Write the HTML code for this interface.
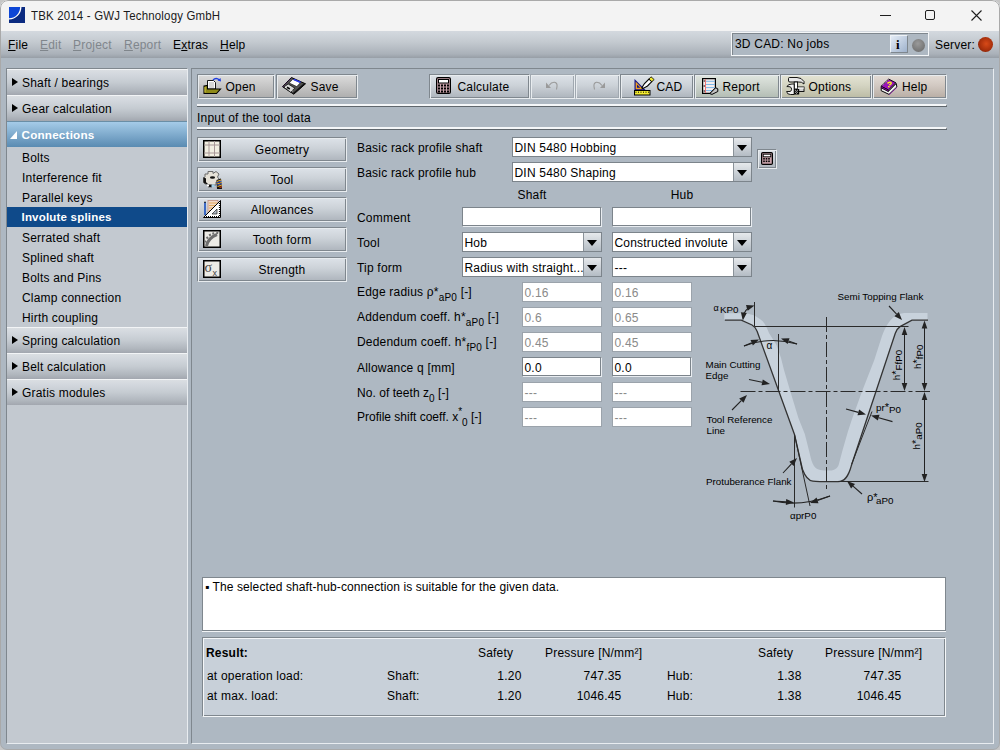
<!DOCTYPE html>
<html><head><meta charset="utf-8"><style>
*{box-sizing:border-box;margin:0;padding:0}
html,body{width:1000px;height:750px;overflow:hidden;background:#c6c6c6}
body{font-family:"Liberation Sans",sans-serif;font-size:12px;color:#000;position:relative}
.a{position:absolute;white-space:nowrap;line-height:1;letter-spacing:0.2px}
svg.a{letter-spacing:0}
#win{position:absolute;left:0;top:0;width:1000px;height:750px;background:#aeb8c2;border-radius:8px 8px 7px 7px;overflow:hidden}
#frame{position:absolute;left:0;top:0;width:1000px;height:750px;border:1px solid #a9a9a9;border-radius:8px 8px 7px 7px}
.u{text-decoration:underline;text-underline-offset:1px}
.dis{color:#80868c}
.hdr{background:linear-gradient(#dadee2,#d2d7dd 20%,#c5cbd1 50%,#b2b8bf 80%,#a2a7af);border-top:1px solid #f2f4f6}
.btn{border:1px solid;border-color:#7f878e #e8ecef #e8ecef #7f878e;box-shadow:inset 1px 1px #e8ecef, inset -1px -1px #7f878e}
.g1{background:linear-gradient(#dcdcdc,#adadad)}
.g2{background:linear-gradient(#dde2e8,#ccd2d8 45%,#adb4bc)}
.g3{background:linear-gradient(#e0e6e0,#cdd4cd 45%,#b2bcb3)}
.g4{background:linear-gradient(#e4e4d4,#d4d4c2 45%,#bbbba4)}
.g5{background:linear-gradient(#e3dcd6,#d2c9c2 45%,#b8ada4)}
.inp{background:#fff;border:1px solid #7c848b;border-right-color:#e9edf1;border-bottom-color:#e9edf1;box-shadow:inset -1px -1px #7c848b}
.inpd{background:#fff;border:1px solid #9ba3ab}
.cmb{background:#fff;border:1px solid #7c848b}
.arr{position:absolute;right:0;top:0;width:18px;height:100%;background:linear-gradient(#e6e9ec,#b4bcc4);border-left:1px solid #8a9299}
.arr:after{content:"";position:absolute;left:3px;top:7px;border-left:5px solid transparent;border-right:5px solid transparent;border-top:6px solid #000}
.dbtn{border-color:#a0a8b0 #e8ecef #e8ecef #a0a8b0;box-shadow:inset 1px 1px #e8ecef, inset -1px -1px #a0a8b0}
.sep{height:3px;border-top:2px solid #f4f6f8;border-bottom:1px solid #5f666c;border-right:1px solid #5f666c}
</style></head><body>
<div id="win">
<div class="a " style="left:0px;top:0px;width:1000px;height:31px;background:#f3f3f3"></div>
<svg class="a" style="left:9px;top:7px" width="16" height="16" viewBox="0 0 16 16"><rect x="0" y="0" width="16" height="16" fill="#0a2a80"/><path d="M0 0H11.5A11.5 11.5 0 0 1 0 11.5Z" fill="#0d46d6"/><path d="M11.8 0A11.8 11.8 0 0 1 0 11.8" stroke="#fff" stroke-width="1.3" fill="none"/></svg>
<div class="a " style="left:31px;top:10.33px;font-size:12.6px;color:#1b1b1b;transform:scaleX(0.91);transform-origin:0 0">TBK 2014 - GWJ Technology GmbH</div>
<div class="a " style="left:880px;top:15px;width:11px;height:1px;background:#1e1e1e"></div>
<div class="a " style="left:925px;top:10px;width:10px;height:10px;border:1px solid #1e1e1e;border-radius:2px"></div>
<svg class="a" style="left:970.5px;top:9.5px" width="11" height="11" viewBox="0 0 11 11"><path d="M0.5 0.5L10.5 10.5M10.5 0.5L0.5 10.5" stroke="#1e1e1e" stroke-width="1.1"/></svg>
<div class="a " style="left:1px;top:31px;width:998px;height:27px;background:linear-gradient(#d4d9df,#c4cad0 40%,#aab1b9 85%,#979ea6)"></div>
<div class="a " style="left:8px;top:38.84px;font-size:12px;"><span class="u">F</span>ile</div>
<div class="a dis" style="left:40px;top:38.84px;font-size:12px;"><span class="u">E</span>dit</div>
<div class="a dis" style="left:73px;top:38.84px;font-size:12px;"><span class="u">P</span>roject</div>
<div class="a dis" style="left:124px;top:38.84px;font-size:12px;"><span class="u">R</span>eport</div>
<div class="a " style="left:173px;top:38.84px;font-size:12px;">E<span class="u">x</span>tras</div>
<div class="a " style="left:220px;top:38.84px;font-size:12px;"><span class="u">H</span>elp</div>
<div class="a " style="left:731px;top:32px;width:198px;height:24px;border:1px solid;border-color:#f4f6f8 #f4f6f8 #f4f6f8 #f4f6f8;background:#aeb8c2;box-shadow:inset 1px 1px #7f878e"></div>
<div class="a " style="left:735px;top:37.84px;font-size:12px;">3D CAD: No jobs</div>
<div class="a " style="left:890px;top:35px;width:18px;height:18px;border:1px solid;border-color:#eef2f6 #7f878e #7f878e #eef2f6;background:linear-gradient(135deg,#e4ecf6,#9fb2cc)"></div>
<div class="a " style="left:896px;top:37.99px;font-size:13px;font-family:Liberation Serif,serif"><b>i</b></div>
<div class="a " style="left:911.5px;top:38.5px;width:13px;height:13px;border-radius:50%;background:radial-gradient(circle at 45% 35%,#9a9a9a,#707070 80%)"></div>
<div class="a " style="left:935px;top:38.84px;font-size:12px;">Server:</div>
<div class="a " style="left:977.5px;top:36.5px;width:15px;height:15px;border-radius:50%;background:radial-gradient(circle at 55% 45%,#d84a18,#a8300c 55%,#6a1804)"></div>
<div class="a " style="left:6px;top:68px;width:182px;height:676px;background:#c3c9d0;border:1px solid;border-color:#7f878e #e8ecf0 #e8ecf0 #7f878e"></div>
<div class="a hdr" style="left:7px;top:69px;width:180px;height:26px;"></div>
<div class="a" style="left:12px;top:78px;width:0;height:0;border-left:6px solid #000;border-top:4.5px solid transparent;border-bottom:4.5px solid transparent"></div>
<div class="a " style="left:22px;top:77.34px;font-size:12px;">Shaft / bearings</div>
<div class="a hdr" style="left:7px;top:95px;width:180px;height:26px;"></div>
<div class="a" style="left:12px;top:104px;width:0;height:0;border-left:6px solid #000;border-top:4.5px solid transparent;border-bottom:4.5px solid transparent"></div>
<div class="a " style="left:22px;top:103.34px;font-size:12px;">Gear calculation</div>
<div class="a " style="left:7px;top:121px;width:180px;height:26px;background:linear-gradient(#a5cbe8,#5a8bb2);border-top:1px solid #6a8ea6"></div>
<svg class="a" style="left:10px;top:131px" width="7" height="8"><path d="M7 0V8H0Z" fill="#fff"/></svg>
<div class="a " style="left:21.5px;top:128.79px;font-size:11.7px;color:#fff"><b>Connections</b></div>
<div class="a " style="left:22px;top:152.44px;font-size:12px;">Bolts</div>
<div class="a " style="left:22px;top:172.44px;font-size:12px;">Interference fit</div>
<div class="a " style="left:22px;top:192.44px;font-size:12px;">Parallel keys</div>
<div class="a " style="left:7px;top:207px;width:180px;height:20px;background:#0f4a8a"></div>
<div class="a " style="left:21.5px;top:212.26px;font-size:11.5px;color:#fff"><b>Involute splines</b></div>
<div class="a " style="left:22px;top:232.44px;font-size:12px;">Serrated shaft</div>
<div class="a " style="left:22px;top:252.44px;font-size:12px;">Splined shaft</div>
<div class="a " style="left:22px;top:272.44px;font-size:12px;">Bolts and Pins</div>
<div class="a " style="left:22px;top:292.44px;font-size:12px;">Clamp connection</div>
<div class="a " style="left:22px;top:312.44px;font-size:12px;">Hirth coupling</div>
<div class="a hdr" style="left:7px;top:327px;width:180px;height:26px;"></div>
<div class="a" style="left:12px;top:336px;width:0;height:0;border-left:6px solid #000;border-top:4.5px solid transparent;border-bottom:4.5px solid transparent"></div>
<div class="a " style="left:22px;top:335.34px;font-size:12px;">Spring calculation</div>
<div class="a hdr" style="left:7px;top:353px;width:180px;height:26px;"></div>
<div class="a" style="left:12px;top:362px;width:0;height:0;border-left:6px solid #000;border-top:4.5px solid transparent;border-bottom:4.5px solid transparent"></div>
<div class="a " style="left:22px;top:361.34px;font-size:12px;">Belt calculation</div>
<div class="a hdr" style="left:7px;top:379px;width:180px;height:26px;"></div>
<div class="a" style="left:12px;top:388px;width:0;height:0;border-left:6px solid #000;border-top:4.5px solid transparent;border-bottom:4.5px solid transparent"></div>
<div class="a " style="left:22px;top:387.34px;font-size:12px;">Gratis modules</div>
<div class="a " style="left:191px;top:68px;width:803px;height:676px;border:1px solid;border-color:#7f878e #e8ecf0 #e8ecf0 #7f878e"></div>
<div class="a btn g1" style="left:197px;top:74px;width:78px;height:25px;"></div>
<svg class="a" style="left:203px;top:77px" width="19" height="18" viewBox="0 0 19 18"><path d="M4.5 3.5H10.5L12.5 5.5V12H4.5Z" fill="#fff" stroke="#000" stroke-width="0.9"/><path d="M6 6H11M6 8H11M6 10H11" stroke="#999" stroke-width="0.8"/><path d="M10 3Q13 0 16.5 3" stroke="#1c3ce0" stroke-width="1.3" fill="none"/><path d="M14.5 3.5L18 4.5L17.5 1Z" fill="#1c3ce0"/><path d="M1 9L4.5 8.5V12H17.5L13.5 16.5H1Z" fill="#8f8a18" stroke="#000" stroke-width="1.1"/><path d="M2 10V15.5" stroke="#d8c840" stroke-width="1"/></svg>
<div class="a " style="left:225.5px;top:81.34px;font-size:12px;">Open</div>
<div class="a btn g1" style="left:276px;top:74px;width:82px;height:25px;"></div>
<svg class="a" style="left:282px;top:77px" width="24" height="18" viewBox="0 0 24 18"><path d="M9.4 0.5L23.5 6.8L11.8 17.2L0.5 9.7Z" fill="#505050" stroke="#000" stroke-width="1"/><path d="M11.8 17.2L23.5 6.8L22 6.2L11 16Z" fill="#111"/><path d="M10.8 2.2L18.5 5.6L14.8 9.6L7.2 6Z" fill="#fff" stroke="#111" stroke-width="0.6"/><path d="M12.2 1.8L19 4.8L18 6L11.2 3Z" fill="#2838f0"/><path d="M1.8 10L6.2 7L12.8 11.2L8.5 15.2Z" fill="#d8d8d8" stroke="#000" stroke-width="0.7"/><path d="M5 10.3L7.8 12" stroke="#000" stroke-width="1.6"/><path d="M3.2 10.2L4 10.7M9.5 13.5L10.5 14" stroke="#fff" stroke-width="1"/><path d="M0.8 9.9L9.4 0.7" stroke="#6a1a8a" stroke-width="0.6" stroke-dasharray="1 1"/></svg>
<div class="a " style="left:310.5px;top:81.34px;font-size:12px;">Save</div>
<div class="a btn g2" style="left:429px;top:74px;width:101px;height:25px;"></div>
<svg class="a" style="left:436px;top:77px" width="15" height="17" viewBox="0 0 15 17"><rect x="0.6" y="0.6" width="13.8" height="15.8" rx="1.5" fill="#c9a2aa" stroke="#000" stroke-width="1.2"/><rect x="2.5" y="2.5" width="10" height="3.5" fill="#fff" stroke="#000" stroke-width="1"/><g fill="#000"><rect x="2" y="7.5" width="2" height="2"/><rect x="5" y="7.5" width="2" height="2"/><rect x="8" y="7.5" width="2" height="2"/><rect x="11" y="7.5" width="2" height="2"/><rect x="2" y="10.5" width="2" height="2"/><rect x="5" y="10.5" width="2" height="2"/><rect x="8" y="10.5" width="2" height="2"/><rect x="11" y="10.5" width="2" height="2"/><rect x="2" y="13.5" width="2" height="2"/><rect x="5" y="13.5" width="2" height="2"/><rect x="8" y="13.5" width="2" height="2"/><rect x="11" y="13.5" width="2" height="2"/></g></svg>
<div class="a " style="left:457.5px;top:81.34px;font-size:12px;">Calculate</div>
<div class="a btn g2 dbtn" style="left:530px;top:74px;width:45px;height:25px;"></div>
<svg class="a" style="left:545px;top:81px" width="14" height="9" viewBox="0 0 14 9"><path d="M1 1.5V7H6Z" fill="#9a9a9a"/><path d="M4 4.5Q6.5 1 9.5 1.3Q12.5 2 12 5.5L11.5 8.5" stroke="#9a9a9a" stroke-width="1.1" fill="none"/></svg>
<div class="a btn g2 dbtn" style="left:575px;top:74px;width:45px;height:25px;"></div>
<svg class="a" style="left:592px;top:81px" width="14" height="9" viewBox="0 0 14 9"><path d="M13 1.5V7H8Z" fill="#9a9a9a"/><path d="M10 4.5Q7.5 1 4.5 1.3Q1.5 2 2 5.5L2.5 8.5" stroke="#9a9a9a" stroke-width="1.1" fill="none"/></svg>
<div class="a btn g2" style="left:620px;top:74px;width:74px;height:25px;"></div>
<svg class="a" style="left:634px;top:76px" width="21" height="20" viewBox="0 0 21 20"><path d="M0.5 3V14.5H12Z" fill="#10108a"/><path d="M1.6 5.5V13.3H9.2Z" fill="#f0a020"/><path d="M3 8.5V11.8H6.3Z" fill="#10108a"/><rect x="0.5" y="14.5" width="15.5" height="4.5" fill="#f4ec30" stroke="#000" stroke-width="1"/><path d="M1.5 16.2H15" stroke="#000" stroke-width="1" stroke-dasharray="1 1.5"/><path d="M8 11.5L10.5 7.5L15 3L17.8 5.6L13.5 10L9.2 12.4Z" fill="#fff" stroke="#000" stroke-width="1.1"/><path d="M8 11.5L9.2 12.4L7.5 13.2Z" fill="#000"/><path d="M15 3L17 0.8L20.2 3.6L17.8 5.6Z" fill="#f4ec30" stroke="#000" stroke-width="0.8"/></svg>
<div class="a " style="left:656.5px;top:81.34px;font-size:12px;">CAD</div>
<div class="a btn g3" style="left:694px;top:74px;width:86px;height:25px;"></div>
<svg class="a" style="left:702px;top:78px" width="17" height="17" viewBox="0 0 17 17"><path d="M0.6 0.6H13.4V10.3L8.2 15.4H0.6Z" fill="#f4eeee" stroke="#000" stroke-width="1.2"/><path d="M4 3.3H13M4 6.5H13M4 9.6H12.5M4 12.6H10" stroke="#7cb8e8" stroke-width="1"/><path d="M3.5 1.2V15" stroke="#f07878" stroke-width="1"/><g fill="#000"><circle cx="2.2" cy="3" r="0.7"/><circle cx="2.2" cy="8" r="0.7"/><circle cx="2.2" cy="13" r="0.7"/></g><path d="M7.8 15.6L13.6 9.8L15.8 10.8V13.5L10 16.4Z" fill="#c4c4c4" stroke="#000" stroke-width="1"/></svg>
<div class="a " style="left:722.5px;top:81.34px;font-size:12px;">Report</div>
<div class="a btn g4" style="left:780px;top:74px;width:92px;height:25px;"></div>
<svg class="a" style="left:786px;top:77px" width="19" height="18" viewBox="0 0 19 18"><path d="M2.5 1.5Q2.5 0.5 3.5 0.5H11Q15.5 0.5 18 4.5V7Q15.5 4.5 12.5 5H4Q2.5 5 2.5 4Z" fill="#e8e8e8" stroke="#000" stroke-width="0.9"/><rect x="8.2" y="5" width="3.4" height="7" fill="#fff" stroke="#000" stroke-width="0.9"/><path d="M0.8 9.5Q2.5 7 6 7H8.2V17.5H4.5Q1 17.5 0.6 14.5H4Q5.6 14 5.6 12.3Q5.6 10.3 4 9.8Z" fill="#f0f0f0" stroke="#000" stroke-width="0.9"/><rect x="11.6" y="10" width="6.4" height="4.5" fill="#d0d0d0" stroke="#000" stroke-width="0.9"/><path d="M11.6 11H18" stroke="#fff" stroke-width="1"/><rect x="8.2" y="12" width="5" height="5.5" fill="#000"/><g fill="#ddd"><rect x="9.0" y="12.8" width="0.9" height="0.9"/><rect x="11.0" y="12.8" width="0.9" height="0.9"/><rect x="10.0" y="13.8" width="0.9" height="0.9"/><rect x="9.0" y="14.8" width="0.9" height="0.9"/><rect x="11.0" y="14.8" width="0.9" height="0.9"/><rect x="10.0" y="15.8" width="0.9" height="0.9"/></g></svg>
<div class="a " style="left:808.5px;top:81.34px;font-size:12px;">Options</div>
<div class="a btn g5" style="left:872px;top:74px;width:75px;height:25px;"></div>
<svg class="a" style="left:880px;top:78px" width="18" height="18" viewBox="0 0 18 18"><path d="M1.2 9.5L8.4 13.3L16.2 5.5L16.9 8.9L9 16.4L1.2 12.7Z" fill="#f0f0f0" stroke="#000" stroke-width="1"/><path d="M9 16.4L16.9 8.9L16.9 9.8L9.3 17Z" fill="#9010b0"/><path d="M8.7 1.1L15.9 4.8L8.4 12L1 8.2Z" fill="#9a14b8" stroke="#000" stroke-width="0.9"/><path d="M1 8.2L8.4 12V13.6L1.1 9.8Z" fill="#9010b0" stroke="#000" stroke-width="0.6"/><path d="M1.8 7.6L8.4 1.6" stroke="#e8e0f0" stroke-width="0.9" stroke-dasharray="1 1"/><path d="M7.5 5.5Q8.5 3.8 10.5 4.3Q12 5 10.5 6.3L9.3 7" stroke="#f8f020" stroke-width="1.5" fill="none"/><rect x="8" y="8" width="1.6" height="1.4" fill="#f8f020"/></svg>
<div class="a " style="left:902px;top:81.34px;font-size:12px;">Help</div>
<div class="a sep" style="left:197px;top:104px;width:750px;height:3px;"></div>
<div class="a " style="left:197px;top:112.34px;font-size:12px;">Input of the tool data</div>
<div class="a sep" style="left:197px;top:127px;width:750px;height:3px;"></div>
<div class="a btn g2" style="left:197px;top:137px;width:150px;height:25px;"></div>
<svg class="a" style="left:203px;top:140px" width="18" height="18" viewBox="0 0 18 18"><rect x="0.75" y="0.75" width="16.5" height="16.5" fill="#f2efe2" stroke="#000" stroke-width="1.5"/><path d="M6 1V17M11.5 1V17M1 5H17M1 13H17" stroke="#a89898" stroke-width="1"/></svg>
<div class="a" style="left:132px;width:300px;text-align:center;top:144.34px;font-size:12px;">Geometry</div>
<div class="a btn g2" style="left:197px;top:167px;width:150px;height:25px;"></div>
<svg class="a" style="left:203px;top:170px" width="19" height="20" viewBox="0 0 19 20"><path d="M2 4H5V1.5H10V3.5L13 1.5L16 4L14.5 7L16 9V12H13V15H9V17H5V14H2L0.5 12.5V8L2 6.5Z" fill="#e6e2d8" stroke="#6a6a6a" stroke-width="1"/><path d="M0.5 7V12.5L3 14H5V17H9V14.5H5L3 12L3 8.5Z" fill="#111"/><ellipse cx="9.5" cy="7.5" rx="2.6" ry="1.3" fill="#111"/><rect x="8.5" y="14.5" width="3" height="2.5" fill="#9fd0e8"/><path d="M4 14.5h2v2h-2z" fill="#fff"/><path d="M13.5 10L18 8.5L19 19H14Z" fill="#111"/><path d="M14 11.5L18.2 10M14.2 14L18.5 12.5M14.5 16.5L18.7 15" stroke="#f0b020" stroke-width="1.2"/><path d="M14.1 12.7L18.3 11.2M14.3 15.2L18.6 13.7" stroke="#2850d0" stroke-width="1"/><path d="M16.5 17.5L18.8 16.8" stroke="#e04010" stroke-width="1.2"/></svg>
<div class="a" style="left:132px;width:300px;text-align:center;top:174.34px;font-size:12px;">Tool</div>
<div class="a btn g2" style="left:197px;top:197px;width:150px;height:25px;"></div>
<svg class="a" style="left:203px;top:200px" width="18" height="18" viewBox="0 0 18 18"><rect x="5" y="0.5" width="10" height="13" fill="#f0d8c8" stroke="#c09080" stroke-width="0.8"/><path d="M6 3H14M6 5.5H14M6 8H14M6 10.5H12" stroke="#e0a040" stroke-width="0.8"/><path d="M17.5 0.5V17.5H0.5Z" fill="#fff" stroke="#000" stroke-width="1"/><path d="M14 9V14H9Z" fill="#aeb8c2" stroke="#000" stroke-width="0.6"/><path d="M3 16.5H17M16.5 3V16.5" stroke="#000" stroke-width="1.2" stroke-dasharray="1 1"/><path d="M2 2V15" stroke="#1a50c0" stroke-width="1.6"/><path d="M2 1L1 3H3Z" fill="#222"/></svg>
<div class="a" style="left:132px;width:300px;text-align:center;top:204.34px;font-size:12px;">Allowances</div>
<div class="a btn g2" style="left:197px;top:227px;width:150px;height:25px;"></div>
<svg class="a" style="left:203px;top:230px" width="18" height="18" viewBox="0 0 18 18"><rect x="0.75" y="0.75" width="16.5" height="16.5" fill="#ecebe6" stroke="#000" stroke-width="1.5"/><path d="M3.5 16Q5 8 14 4.5" stroke="#6e6e6e" stroke-width="3" fill="none"/><path d="M3 12l-1.5 -1M5 8.5l-1.5-1.5M7.5 6l-1-2M10.5 4.5l-0.5-2M14 4l0.5-2" stroke="#6e6e6e" stroke-width="2"/></svg>
<div class="a" style="left:132px;width:300px;text-align:center;top:234.34px;font-size:12px;">Tooth form</div>
<div class="a btn g2" style="left:197px;top:257px;width:150px;height:25px;"></div>
<svg class="a" style="left:203px;top:260px" width="18" height="18" viewBox="0 0 18 18"><rect x="0.75" y="0.75" width="16.5" height="16.5" fill="#ecebe6" stroke="#000" stroke-width="1.5"/><text x="1.5" y="12" font-size="14" fill="#444" font-family="Liberation Serif">&#963;</text><text x="9.5" y="15.5" font-size="9" fill="#444" font-family="Liberation Sans">x</text></svg>
<div class="a" style="left:132px;width:300px;text-align:center;top:264.34px;font-size:12px;">Strength</div>
<div class="a " style="left:357px;top:142.24px;font-size:12px;">Basic rack profile shaft</div>
<div class="a " style="left:357px;top:166.94px;font-size:12px;">Basic rack profile hub</div>
<div class="a cmb" style="left:512px;top:137px;width:240px;height:20px;"><div class="arr"></div></div>
<div class="a " style="left:514.5px;top:142.34px;font-size:12px;">DIN 5480 Hobbing</div>
<div class="a cmb" style="left:512px;top:162px;width:240px;height:20px;"><div class="arr"></div></div>
<div class="a " style="left:514.5px;top:167.34px;font-size:12px;">DIN 5480 Shaping</div>
<div class="a btn g2" style="left:757px;top:149px;width:20px;height:20px;"></div>
<svg class="a" style="left:761px;top:152px" width="12" height="13" viewBox="0 0 12 13"><rect x="0.6" y="0.6" width="10.8" height="11.8" rx="1.2" fill="#c9a2aa" stroke="#000" stroke-width="1.2"/><rect x="2.2" y="2.2" width="7.6" height="2.6" fill="#fff" stroke="#000" stroke-width="0.9"/><g fill="#000"><rect x="2.2" y="6.0" width="1.6" height="1.6"/><rect x="4.7" y="6.0" width="1.6" height="1.6"/><rect x="7.2" y="6.0" width="1.6" height="1.6"/><rect x="2.2" y="8.5" width="1.6" height="1.6"/><rect x="4.7" y="8.5" width="1.6" height="1.6"/><rect x="7.2" y="8.5" width="1.6" height="1.6"/></g></svg>
<div class="a" style="left:382px;width:300px;text-align:center;top:189.44px;font-size:12px;">Shaft</div>
<div class="a" style="left:532px;width:300px;text-align:center;top:189.44px;font-size:12px;">Hub</div>
<div class="a " style="left:357px;top:212.34px;font-size:12px;">Comment</div>
<div class="a inp" style="left:462px;top:207px;width:140px;height:20px;"></div>
<div class="a inp" style="left:612px;top:207px;width:140px;height:20px;"></div>
<div class="a " style="left:357px;top:236.64px;font-size:12px;">Tool</div>
<div class="a cmb" style="left:462px;top:232px;width:140px;height:20px;"><div class="arr"></div></div>
<div class="a " style="left:464.5px;top:237.34px;font-size:12px;">Hob</div>
<div class="a cmb" style="left:612px;top:232px;width:140px;height:20px;"><div class="arr"></div></div>
<div class="a " style="left:614.5px;top:237.34px;font-size:12px;">Constructed involute</div>
<div class="a " style="left:357px;top:261.64px;font-size:12px;">Tip form</div>
<div class="a cmb" style="left:462px;top:257px;width:140px;height:20px;"><div class="arr"></div></div>
<div class="a " style="left:464.5px;top:262.34px;font-size:12px;">Radius with straight...</div>
<div class="a cmb" style="left:612px;top:257px;width:140px;height:20px;"><div class="arr"></div></div>
<div class="a " style="left:614.5px;top:262.34px;font-size:12px;">---</div>
<div class="a " style="left:357px;top:286.04px;font-size:12px;">Edge radius &#961;*<span style="font-size:10px;position:relative;top:5px">aP0</span> [-]</div>
<div class="a " style="left:357px;top:310.54px;font-size:12px;">Addendum coeff. h*<span style="font-size:10px;position:relative;top:5px">aP0</span> [-]</div>
<div class="a " style="left:357px;top:335.64px;font-size:12px;">Dedendum coeff. h*<span style="font-size:10px;position:relative;top:5px">fP0</span> [-]</div>
<div class="a " style="left:357px;top:361.84px;font-size:12px;">Allowance q [mm]</div>
<div class="a " style="left:357px;top:387.04px;font-size:12px;letter-spacing:0.05px">No. of teeth z<span style="font-size:10px;position:relative;top:5px">0</span> [-]</div>
<div class="a " style="left:357px;top:411.44px;font-size:12px;letter-spacing:0">Profile shift coeff. x<span style="font-size:10px;position:relative;top:-6px">*</span><span style="font-size:10px;position:relative;top:5px">0</span> [-]</div>
<div class="a inpd" style="left:522px;top:282px;width:80px;height:20px;"></div>
<div class="a " style="left:524.5px;top:287.34px;font-size:12px;color:#8a8a8a">0.16</div>
<div class="a inpd" style="left:612px;top:282px;width:80px;height:20px;"></div>
<div class="a " style="left:614.5px;top:287.34px;font-size:12px;color:#8a8a8a">0.16</div>
<div class="a inpd" style="left:522px;top:307px;width:80px;height:20px;"></div>
<div class="a " style="left:524.5px;top:312.34px;font-size:12px;color:#8a8a8a">0.6</div>
<div class="a inpd" style="left:612px;top:307px;width:80px;height:20px;"></div>
<div class="a " style="left:614.5px;top:312.34px;font-size:12px;color:#8a8a8a">0.65</div>
<div class="a inpd" style="left:522px;top:332px;width:80px;height:20px;"></div>
<div class="a " style="left:524.5px;top:337.34px;font-size:12px;color:#8a8a8a">0.45</div>
<div class="a inpd" style="left:612px;top:332px;width:80px;height:20px;"></div>
<div class="a " style="left:614.5px;top:337.34px;font-size:12px;color:#8a8a8a">0.45</div>
<div class="a inp" style="left:522px;top:357px;width:80px;height:20px;"></div>
<div class="a " style="left:524.5px;top:362.34px;font-size:12px;">0.0</div>
<div class="a inp" style="left:612px;top:357px;width:80px;height:20px;"></div>
<div class="a " style="left:614.5px;top:362.34px;font-size:12px;">0.0</div>
<div class="a inpd" style="left:522px;top:382px;width:80px;height:20px;"></div>
<div class="a " style="left:524.5px;top:387.34px;font-size:12px;color:#8a8a8a">---</div>
<div class="a inpd" style="left:612px;top:382px;width:80px;height:20px;"></div>
<div class="a " style="left:614.5px;top:387.34px;font-size:12px;color:#8a8a8a">---</div>
<div class="a inpd" style="left:522px;top:407px;width:80px;height:20px;"></div>
<div class="a " style="left:524.5px;top:412.34px;font-size:12px;color:#8a8a8a">---</div>
<div class="a inpd" style="left:612px;top:407px;width:80px;height:20px;"></div>
<div class="a " style="left:614.5px;top:412.34px;font-size:12px;color:#8a8a8a">---</div>
<svg class="a" style="left:695px;top:280px" width="250" height="250" viewBox="695 280 250 250"><path d="M724.3 313.3 H741 C750 313 757 316 762.7 321.3 C765.5 324.5 767 328 769 333 L776.5 345 L781 358 L784 370 L789.6 389 L798.4 418 L804.8 434 L809.6 453 C811 459 812 463 814 466 C816.5 469.5 820 470.6 826 470.6 H830 C835 470.6 837.5 468 838.7 464.8 L842.4 450.8 L848 431.2 L851.7 420 L862 391.5 L874.3 360 L882 336 C886 325 891 318 897 315 C900 313.5 903 313 907 313 H927.5 V320.3 H912 L900 326.6 C897.5 328.5 896.2 331 895.3 333.5 L851.3 465.8 C849 473 846 481.6 838 481.6 H818 C810 481.6 805.5 477 803.5 471 L794.6 434.7 L757 331 C755.7 328 754 326.5 752 325.5 L741 320.3 H724.3 Z" fill="#c8d2dc"/><path d="M724.8 320.2 H741.3 L752 325 C754.5 326.5 756 328 757 331 L794.5 434.5 L802.4 469.2 C805 476 808 480.4 812.8 481.2 C815 481.6 817 481.6 820 481.6 H838 C845 481.6 848.5 476 851.3 465.8 L895.3 333.3 C896.2 330.5 897.5 328.3 900 326.6 L912 320.2 H928" fill="none" stroke="#333" stroke-width="1.3"/><path d="M754.5 326.5 H908.5 M754.5 302 V326.5 M778.5 334 V391 M794.5 434.5 V507.5 M794.5 434.5 L810 506 M872 411.5 L851.7 464 M838 481.5 H928.5" fill="none" stroke="#2a2a2a" stroke-width="1"/><path d="M740.5 391.5 H930" stroke="#2a2a2a" stroke-width="1" stroke-dasharray="15 3 4 3"/><path d="M826.5 317 V491" stroke="#2a2a2a" stroke-width="1" stroke-dasharray="15 3 4 3"/><path d="M904.5 333 V385 M924.5 326 V385 M924.5 397 V476" stroke="#222" stroke-width="1"/><path d="M904.5 391 l-2.8 -8 h5.6Z" fill="#222"/><path d="M904.5 327 l-2.8 8 h5.6Z" fill="#222"/><path d="M924.5 391 l-2.8 -8 h5.6Z" fill="#222"/><path d="M924.5 320.5 l-2.8 8 h5.6Z" fill="#222"/><path d="M924.5 392 l-2.8 8 h5.6Z" fill="#222"/><path d="M924.5 482 l-2.8 -8 h5.6Z" fill="#222"/><path d="M749.0 379.5 L762.2 382.3" stroke="#222" stroke-width="1.1"/><path d="M770.0 384.0 L761.5 385.3 L762.8 379.4 Z" fill="#222"/><path d="M732.0 410.0 L741.3 400.7" stroke="#222" stroke-width="1.1"/><path d="M747.0 395.0 L743.5 402.8 L739.2 398.5 Z" fill="#222"/><path d="M783.0 473.0 L791.5 463.8" stroke="#222" stroke-width="1.1"/><path d="M797.0 458.0 L793.7 465.9 L789.3 461.8 Z" fill="#222"/><path d="M889.0 306.0 L896.6 314.1" stroke="#222" stroke-width="1.1"/><path d="M902.0 320.0 L894.4 316.2 L898.8 312.1 Z" fill="#222"/><path d="M862.0 494.0 L853.0 486.2" stroke="#222" stroke-width="1.1"/><path d="M847.0 481.0 L855.0 484.0 L851.1 488.5 Z" fill="#222"/><path d="M846.0 409.0 L858.3 412.4" stroke="#222" stroke-width="1.1"/><path d="M866.0 414.5 L857.5 415.3 L859.1 409.5 Z" fill="#222"/><path d="M892.5 421.6 L878.7 417.7" stroke="#222" stroke-width="1.1"/><path d="M871.0 415.5 L879.5 414.8 L877.9 420.6 Z" fill="#222"/><path d="M744 346 Q770 336 797 344" fill="none" stroke="#222" stroke-width="1.1"/><path d="M744.0 346.0 L751.7 342.7" stroke="#222" stroke-width="1.1"/><path d="M759.0 339.5 L752.9 345.4 L750.5 339.9 Z" fill="#222"/><path d="M797.0 344.0 L788.6 341.1" stroke="#222" stroke-width="1.1"/><path d="M781.0 338.5 L789.5 338.3 L787.6 343.9 Z" fill="#222"/><path d="M743.5 316 Q745 309 751 306.8" fill="none" stroke="#222" stroke-width="1.1"/><path d="M743.8 313.0 L743.9 312.6" stroke="#222" stroke-width="1.1"/><path d="M742.8 320.5 L740.9 312.2 L746.8 313.0 Z" fill="#222"/><path d="M748.0 307.5 L746.9 307.9" stroke="#222" stroke-width="1.1"/><path d="M754.5 305.5 L747.7 310.7 L746.0 305.0 Z" fill="#222"/><path d="M773 501 Q800 507 830 496" fill="none" stroke="#222" stroke-width="1.1"/><path d="M773.0 501.0 L786.0 501.9" stroke="#222" stroke-width="1.1"/><path d="M794.0 502.5 L785.8 504.9 L786.2 498.9 Z" fill="#222"/><path d="M830.0 496.0 L817.6 500.4" stroke="#222" stroke-width="1.1"/><path d="M810.0 503.0 L816.6 497.5 L818.5 503.2 Z" fill="#222"/><text x="837.5" y="299.7" font-size="9.8" fill="#000" font-family="Liberation Sans" >Semi Topping Flank</text><text x="713.5" y="310.5" font-size="9" fill="#000" font-family="Liberation Sans" >&#945;</text><text x="720" y="312.5" font-size="9.8" fill="#000" font-family="Liberation Sans" >KP0</text><text x="766.5" y="348.8" font-size="10" fill="#000" font-family="Liberation Sans" >&#945;</text><text x="705.5" y="367.8" font-size="9.8" fill="#000" font-family="Liberation Sans" >Main Cutting</text><text x="705.5" y="378.6" font-size="9.8" fill="#000" font-family="Liberation Sans" >Edge</text><text x="706.5" y="422.9" font-size="9.8" fill="#000" font-family="Liberation Sans" >Tool Reference</text><text x="706.5" y="433.8" font-size="9.8" fill="#000" font-family="Liberation Sans" >Line</text><text x="706" y="484.6" font-size="9.8" fill="#000" font-family="Liberation Sans" >Protuberance Flank</text><text x="790" y="518.7" font-size="9.8" fill="#000" font-family="Liberation Sans" >&#945;prP0</text><text x="867" y="500.5" font-size="11" fill="#000" font-family="Liberation Sans" >&#961;*</text><text x="876" y="504" font-size="9.8" fill="#000" font-family="Liberation Sans" >aP0</text><text x="876" y="411.2" font-size="9.8" fill="#000" font-family="Liberation Sans" >pr<tspan dy="0" font-size="11">*</tspan><tspan dy="1.5">P0</tspan></text><text x="900.5" y="380.3" font-size="9.8" fill="#000" font-family="Liberation Sans" transform="rotate(-90 900.5 380.3)">h<tspan dy="0" font-size="11">*</tspan><tspan dy="2">FfP0</tspan></text><text x="920.5" y="369" font-size="9.8" fill="#000" font-family="Liberation Sans" transform="rotate(-90 920.5 369)">h<tspan dy="0" font-size="11">*</tspan><tspan dy="2">fP0</tspan></text><text x="920.5" y="449.4" font-size="9.8" fill="#000" font-family="Liberation Sans" transform="rotate(-90 920.5 449.4)">h<tspan dy="0" font-size="11">*</tspan><tspan dy="2">aP0</tspan></text></svg>
<div class="a " style="left:202px;top:577px;width:744px;height:54px;background:#fff;border:1px solid;border-color:#7f878e #7f878e #7f878e #7f878e;box-shadow:0 1px #f2f4f6"></div>
<div class="a " style="left:205px;top:581.44px;font-size:12px;letter-spacing:0.1px">&#9642; The selected shaft-hub-connection is suitable for the given data.</div>
<div class="a " style="left:202px;top:637px;width:744px;height:80px;background:#c8d0d9;border:1px solid;border-color:#7f878e #f4f6f8 #f4f6f8 #7f878e;box-shadow:inset 1px 1px #f4f6f8, inset -1px -1px #7f878e"></div>
<div class="a " style="left:206px;top:647.04px;font-size:12px;"><b>Result:</b></div>
<div class="a " style="left:478px;top:647.04px;font-size:12px;">Safety</div>
<div class="a " style="left:545px;top:647.04px;font-size:12px;">Pressure [N/mm&#178;]</div>
<div class="a " style="left:758px;top:647.04px;font-size:12px;">Safety</div>
<div class="a " style="left:825px;top:647.04px;font-size:12px;">Pressure [N/mm&#178;]</div>
<div class="a " style="left:207px;top:669.94px;font-size:12px;">at operation load:</div>
<div class="a " style="left:387px;top:669.94px;font-size:12px;">Shaft:</div>
<div class="a" style="right:478.5px;top:669.94px;font-size:12px;">1.20</div>
<div class="a" style="right:378.5px;top:669.94px;font-size:12px;">747.35</div>
<div class="a " style="left:667px;top:669.94px;font-size:12px;">Hub:</div>
<div class="a" style="right:198.5px;top:669.94px;font-size:12px;">1.38</div>
<div class="a" style="right:98.5px;top:669.94px;font-size:12px;">747.35</div>
<div class="a " style="left:207px;top:689.64px;font-size:12px;">at max. load:</div>
<div class="a " style="left:387px;top:689.64px;font-size:12px;">Shaft:</div>
<div class="a" style="right:478.5px;top:689.64px;font-size:12px;">1.20</div>
<div class="a" style="right:378.5px;top:689.64px;font-size:12px;">1046.45</div>
<div class="a " style="left:667px;top:689.64px;font-size:12px;">Hub:</div>
<div class="a" style="right:198.5px;top:689.64px;font-size:12px;">1.38</div>
<div class="a" style="right:98.5px;top:689.64px;font-size:12px;">1046.45</div>
<div id="frame"></div></div></body></html>
